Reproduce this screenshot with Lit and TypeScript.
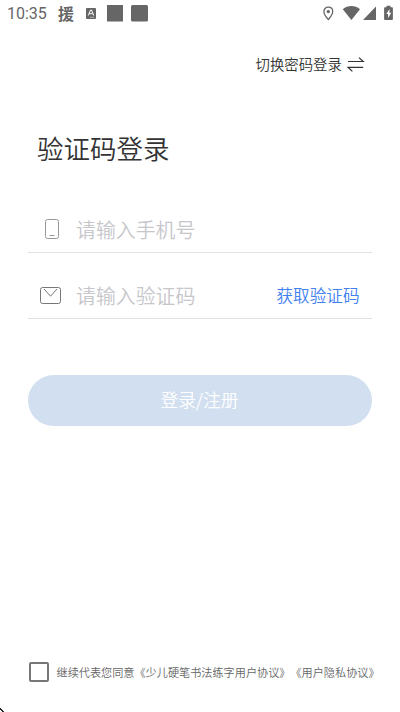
import { LitElement, html, css } from "lit";
import { customElement } from "lit/decorators.js";

@customElement("status-bar")
class StatusBar extends LitElement {
  static styles = css`
    :host { display: flex; align-items: center; justify-content: space-between; height: 27px; color: #666; }
    .left { display: flex; align-items: center; padding-left: 7px; }
    .time { font: 400 16px/27px Roboto, sans-serif; width: 51px; height: 27px; }
    .cjk { font: 700 16px/27px "Noto Sans CJK SC", sans-serif; width: 16px; height: 27px; }
    svg { display: block; }
  `;
  render() {
    return html`
      <div class="left">
        <span class="time">10:35</span>
        <span class="cjk">援</span>
        <svg width="76" height="27" viewBox="0 0 76 27" fill="#666">
          <rect x="12" y="8" width="10" height="11" rx="1" />
          <path d="M14.3 15.5 16.5 10h1l2.2 5.5M15.3 13.7h3.4M16.5 17.3h1M18.5 17.3h1" fill="none" stroke="#fff" stroke-width="1" />
          <rect x="33" y="5" width="16" height="16.5" />
          <rect x="57" y="5" width="17" height="16.5" rx="1.5" />
        </svg>
      </div>
      <svg width="80" height="27" viewBox="320 0 80 27" fill="#666">
        <path d="M328.3 7.2c2.7 0 4.4 1.9 4.4 4.4 0 2.7-2.2 5.6-4.4 7.9-2.2-2.3-4.4-5.2-4.4-7.9 0-2.5 1.7-4.4 4.4-4.4z" fill="none" stroke="#666" stroke-width="1.3" />
        <circle cx="328.3" cy="11.6" r="1.7" />
        <path d="M342.8 9.2c4.8-4.2 12.4-4.2 17.2 0L351.4 20z" />
        <path d="M376 6.5V20h-13z" />
        <path fill-rule="evenodd" d="M386.5 5.8v1.4H385q-.9 0-.9.9v11q0 .9.9.9h7q.9 0 .9-.9v-11q0-.9-.9-.9h-1.5V5.8zM389.5 9l-3.2 5h1.8v4l3.2-5.2h-1.8z" />
      </svg>
    `;
  }
}

@customElement("app-root")
class AppRoot extends LitElement {
  static styles = css`
    :host {
      display: flex; flex-direction: column; box-sizing: border-box; width: 400px; height: 712px;
      background: #fff; color: #333; overflow: hidden; position: relative;
      font-family: "Noto Sans CJK SC", sans-serif; font-weight: 350; white-space: nowrap;
    }
    svg { display: block; flex: none; }
    .switch { display: flex; align-items: center; height: 24px; margin: 25px 0 0 255.5px; font-size: 14.4px; line-height: 24px; }
    .switch svg { margin-left: 5px; }
    h1 { margin: 52px 0 0 37px; font-size: 26.5px; line-height: 40px; font-weight: 350; height: 40px; }
    .field { display: flex; align-items: center; box-sizing: border-box; margin: 0 28px; border-bottom: 1px solid #e2e2e2; height: 66px; padding-top: 20px; }
    .phone { margin-top: 19px; }
    .hint { flex: 1; margin-left: 14px; font-size: 19.9px; line-height: 30px; color: #c6c6cb; }
    .send { margin: 0 12.5px 2px 0; font-size: 16.6px; line-height: 26px; color: #4080f0; }
    .submit {
      border: 0; padding: 0 1px 2px 0; margin: 56px 28px 0; width: 344px; height: 51px; border-radius: 26px;
      background: #d2dff0; color: #fff; font: 350 17.8px/49px "Noto Sans CJK SC", sans-serif;
    }
    .agree { display: flex; align-items: center; height: 20px; margin: auto 0 30px 29px; font-size: 11.15px; line-height: 20px; color: #666; text-spacing-trim: space-all; }
    .box { box-sizing: border-box; width: 20px; height: 20px; border: 2px solid #777; border-radius: 2px; margin-right: 7.5px; }
    .corner { position: absolute; left: 0; bottom: 0; }
  `;
  render() {
    return html`
      <status-bar></status-bar>
      <div class="switch">
        切换密码登录
        <svg width="18" height="18" viewBox="0 0 18 18" fill="none" stroke="#333" stroke-width="1.2">
          <path d="M1 6.5h15.2L12 2.6M16.2 12.3H1l4.4 4.1" />
        </svg>
      </div>
      <h1>验证码登录</h1>
      <div class="field phone">
        <svg width="34" height="24" viewBox="0 0 34 24" fill="none" stroke="#999">
          <rect x="17.5" y="1.5" width="13" height="19" rx="2" />
          <path d="M21.5 17.5h5" />
        </svg>
        <span class="hint">请输入手机号</span>
      </div>
      <div class="field">
        <svg width="34" height="24" viewBox="0 0 34 24" fill="none" stroke="#777">
          <rect x="12.5" y="3.5" width="20" height="16" rx="2" />
          <path d="M16 5l6.5 7.2 6.5-7.2" />
        </svg>
        <span class="hint">请输入验证码</span>
        <span class="send">获取验证码</span>
      </div>
      <button class="submit">登录/注册</button>
      <div class="agree"><span class="box"></span><span>继续代表您同意《少儿硬笔书法练字用户协议》《用户隐私协议》</span></div>
      <svg class="corner" width="5" height="5" viewBox="0 0 5 5"><path d="M0 1h1v1h1v1h1v1h1v1H2V4H1V3H0z" fill="#222" /></svg>
    `;
  }
}
